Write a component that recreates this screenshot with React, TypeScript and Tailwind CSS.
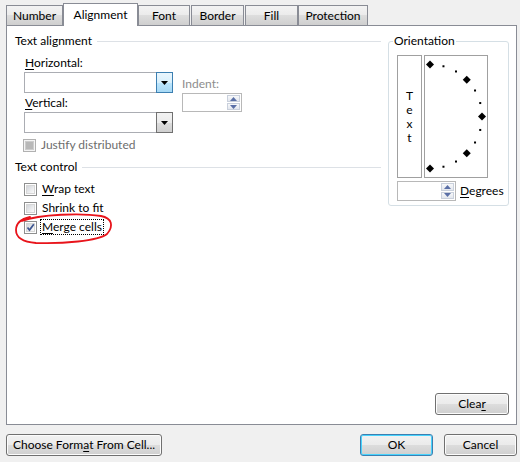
import React from "react";

function Arrow() {
  return (
    <svg width="7" height="4" viewBox="0 0 7 4">
      <polygon points="0,0 7,0 3.5,4" fill="#000" />
    </svg>
  );
}

function Chk({ checked, disabled }: { checked?: boolean; disabled?: boolean }) {
  if (disabled)
    return (
      <div className="w-[13px] h-[13px] border border-[#b1b1b1] bg-[#f4f4f4] flex items-center justify-center shrink-0">
        <div className="w-[9px] h-[9px] bg-[#b8b8b8] border border-[#cccccc]" />
      </div>
    );
  return (
    <div className="w-[13px] h-[13px] border border-[#8e8f8f] bg-white flex items-center justify-center shrink-0 relative">
      <div className="w-[9px] h-[9px] border border-[#d6d6d6] bg-[linear-gradient(135deg,#d2d5da,#fbfbfb)]" />
      {checked && (
        <svg className="absolute left-0 top-0" width="11" height="11" viewBox="0 0 11 11">
          <path d="M2.5 5.5 L4.5 8 L8.8 2.2" stroke="#3d5590" strokeWidth="1.7" fill="none" />
        </svg>
      )}
    </div>
  );
}

function SpinBtns() {
  return (
    <div className="w-[15px] h-full flex flex-col gap-px p-px">
      <div className="flex-1 border border-[#c9d0dc] bg-[linear-gradient(#f7f8fa,#e3e7ee)] flex items-center justify-center">
        <svg width="7" height="4" viewBox="0 0 7 4">
          <polygon points="0,4 7,4 3.5,0" fill="#5a6fa6" />
        </svg>
      </div>
      <div className="flex-1 border border-[#c9d0dc] bg-[linear-gradient(#f7f8fa,#e3e7ee)] flex items-center justify-center">
        <svg width="7" height="4" viewBox="0 0 7 4">
          <polygon points="0,0 7,0 3.5,4" fill="#5a6fa6" />
        </svg>
      </div>
    </div>
  );
}

function Dial() {
  const pts: { x: number; y: number; big: boolean }[] = [];
  for (let a = 90; a >= -90; a -= 15) {
    const r = (a * Math.PI) / 180;
    pts.push({ x: 5 + 52 * Math.cos(r), y: 60.5 - 52 * Math.sin(r), big: a % 45 === 0 });
  }
  return (
    <svg width="62" height="121" viewBox="0 0 62 121">
      {pts.map((p, i) =>
        p.big ? (
          <polygon
            key={i}
            points={`${p.x},${p.y - 4} ${p.x + 4},${p.y} ${p.x},${p.y + 4} ${p.x - 4},${p.y}`}
            fill="#000"
          />
        ) : (
          <rect key={i} x={p.x - 1} y={p.y - 1} width="2" height="2" fill="#000" />
        )
      )}
    </svg>
  );
}

const btn =
  "h-[22px] border border-[#707070] rounded-[3px] bg-[linear-gradient(#f2f2f2,#ebebeb_50%,#dddddd_50%,#cfcfcf)] flex items-center justify-center shadow-[inset_0_0_0_1px_#fcfcfc]";

const tab =
  "h-[20px] border border-b-0 border-[#898c95] bg-[linear-gradient(#f3f3f3,#ebebeb_50%,#dddddd_50%,#cfcfcf)] flex items-center justify-center";

export default function App() {
  return (
    <div className="relative w-[520px] h-[462px] bg-[#f0f0f0] text-[12px] leading-[16px] text-black font-['Lato',sans-serif] overflow-hidden">
      {/* tabs */}
      <div className="flex items-end h-[25px] pl-[6px]">
        <div className={`${tab} w-[57px]`}>Number</div>
        <div className="relative z-10 w-[75px] h-[23px] -mb-px border border-b-0 border-[#898c95] bg-white flex items-start pt-[3px] justify-center">
          Alignment
        </div>
        <div className={`${tab} w-[52px]`}>Font</div>
        <div className={`${tab} ml-px w-[53px]`}>Border</div>
        <div className={`${tab} ml-px w-[53px]`}>Fill</div>
        <div className={`${tab} w-[70px]`}>Protection</div>
      </div>

      {/* panel */}
      <div className="ml-[6px] w-[511px] h-[400px] bg-white border border-[#898c95] flex flex-col">
        <div className="flex">
          {/* left column */}
          <div className="ml-[8px] w-[366px] flex flex-col">
            <div className="mt-[7px] h-[16px] flex items-center">
              <span>Text alignment</span>
              <div className="ml-[5px] flex-1 h-px bg-[#dde1e6]" />
            </div>
            <div className="flex">
              <div className="ml-[9px] w-[149px] flex flex-col">
                <div className="mt-[6px] ml-px h-[16px]">
                  <u className="underline-offset-2">H</u>orizontal:
                </div>
                <div className="mt-px h-[21px] flex">
                  <div className="flex-1 border border-r-0 border-[#abadb3] bg-white" />
                  <div className="w-[17px] h-full border border-[#3c7fb1] bg-[linear-gradient(#eaf6fd,#d9f0fc_50%,#bee6fd_50%,#a7d9f5)] flex items-center justify-center">
                    <Arrow />
                  </div>
                </div>
                <div className="mt-[2px] ml-px h-[16px]">
                  <u className="underline-offset-2">V</u>ertical:
                </div>
                <div className="mt-px h-[21px] flex">
                  <div className="flex-1 border border-r-0 border-[#abadb3] bg-white" />
                  <div className="w-[17px] h-full border border-[#707070] bg-[linear-gradient(#f2f2f2,#ebebeb_50%,#dddddd_50%,#cfcfcf)] flex items-center justify-center">
                    <Arrow />
                  </div>
                </div>
              </div>
              <div className="ml-[9px] mt-[27px] flex flex-col">
                <div className="h-[16px] text-[#8d8d8d]">Indent:</div>
                <div className="mt-px w-[60px] h-[19px] border border-[#b8b8b8] bg-white flex justify-end">
                  <SpinBtns />
                </div>
              </div>
            </div>
            <div className="mt-[4px] h-[16px] flex items-center ml-[8px]">
              <Chk disabled />
              <span className="ml-[5px] text-[#6d6d6d]">Justify distributed</span>
            </div>
            <div className="mt-[6px] h-[16px] flex items-center">
              <span>Text control</span>
              <div className="ml-[5px] flex-1 h-px bg-[#dde1e6]" />
            </div>
            <div className="mt-[6px] h-[16px] flex items-center ml-[9px]">
              <Chk />
              <span className="ml-[4px] px-px">
                <u className="underline-offset-2">W</u>rap text
              </span>
            </div>
            <div className="mt-[3px] h-[16px] flex items-center ml-[9px]">
              <Chk />
              <span className="ml-[4px] px-px">
                Shrin<u className="underline-offset-2">k</u> to fit
              </span>
            </div>
            <div className="mt-[3px] h-[16px] flex items-center ml-[9px]">
              <Chk checked />
              <span className="ml-[3px] px-px border border-dotted border-black leading-[14px] h-[16px]">
                <u className="underline-offset-2">M</u>erge cells
              </span>
            </div>
          </div>

          {/* orientation */}
          <div className="ml-[7px] mt-[15px] w-[121px] h-[165px] border border-[#d5dfe5] rounded-[3px] flex flex-col">
            <div className="-mt-[9px] ml-[4px] w-fit px-px bg-white h-[16px]">Orientation</div>
            <div className="mt-[6px] ml-[8px] flex gap-[2px]">
              <div className="w-[25px] h-[123px] border border-[#a0a0a0] flex flex-col items-center justify-center">
                <div className="leading-[14px] text-center">
                  T<br />e<br />x<br />t
                </div>
              </div>
              <div className="w-[64px] h-[123px] border border-[#a0a0a0]">
                <Dial />
              </div>
            </div>
            <div className="mt-[3px] ml-[8px] flex items-center">
              <div className="w-[59px] h-[20px] border border-[#b8b8b8] bg-white flex justify-end">
                <SpinBtns />
              </div>
              <span className="ml-[4px]">
                <u className="underline-offset-2">D</u>egrees
              </span>
            </div>
          </div>
        </div>

        <div className="mt-auto mb-[9px] mr-[7px] flex justify-end">
          <div className={`${btn} w-[74px]`}>
            Clea<u className="underline-offset-2">r</u>
          </div>
        </div>
      </div>

      {/* bottom buttons */}
      <div className="mt-[9px] pl-[6px] pr-[3px] flex">
        <div className={`${btn} w-[156px]`}>
          Choose Form<u className="underline-offset-2">a</u>t From Cell...
        </div>
        <div className="ml-auto w-[73px] h-[22px] border border-[#3c7fb1] rounded-[3px] bg-[linear-gradient(#f2f2f2,#ebebeb_50%,#dddddd_50%,#cfcfcf)] flex items-center justify-center shadow-[inset_0_0_0_1px_#48d3fd]">
          OK
        </div>
        <div className={`${btn} ml-[11px] w-[73px]`}>Cancel</div>
      </div>

      {/* red annotation */}
      <svg className="absolute left-0 top-0 pointer-events-none" width="520" height="462" viewBox="0 0 520 462">
        <path
          d="M22 221 C40 214, 82 213, 101 216 C112 218, 114 226, 107 234 C98 241, 62 244, 36 243 C23 242, 16 238, 16 230 C16 224, 21 219, 30 217"
          stroke="#e8141b"
          strokeWidth="1.8"
          fill="none"
          strokeLinecap="round"
        />
      </svg>
    </div>
  );
}
